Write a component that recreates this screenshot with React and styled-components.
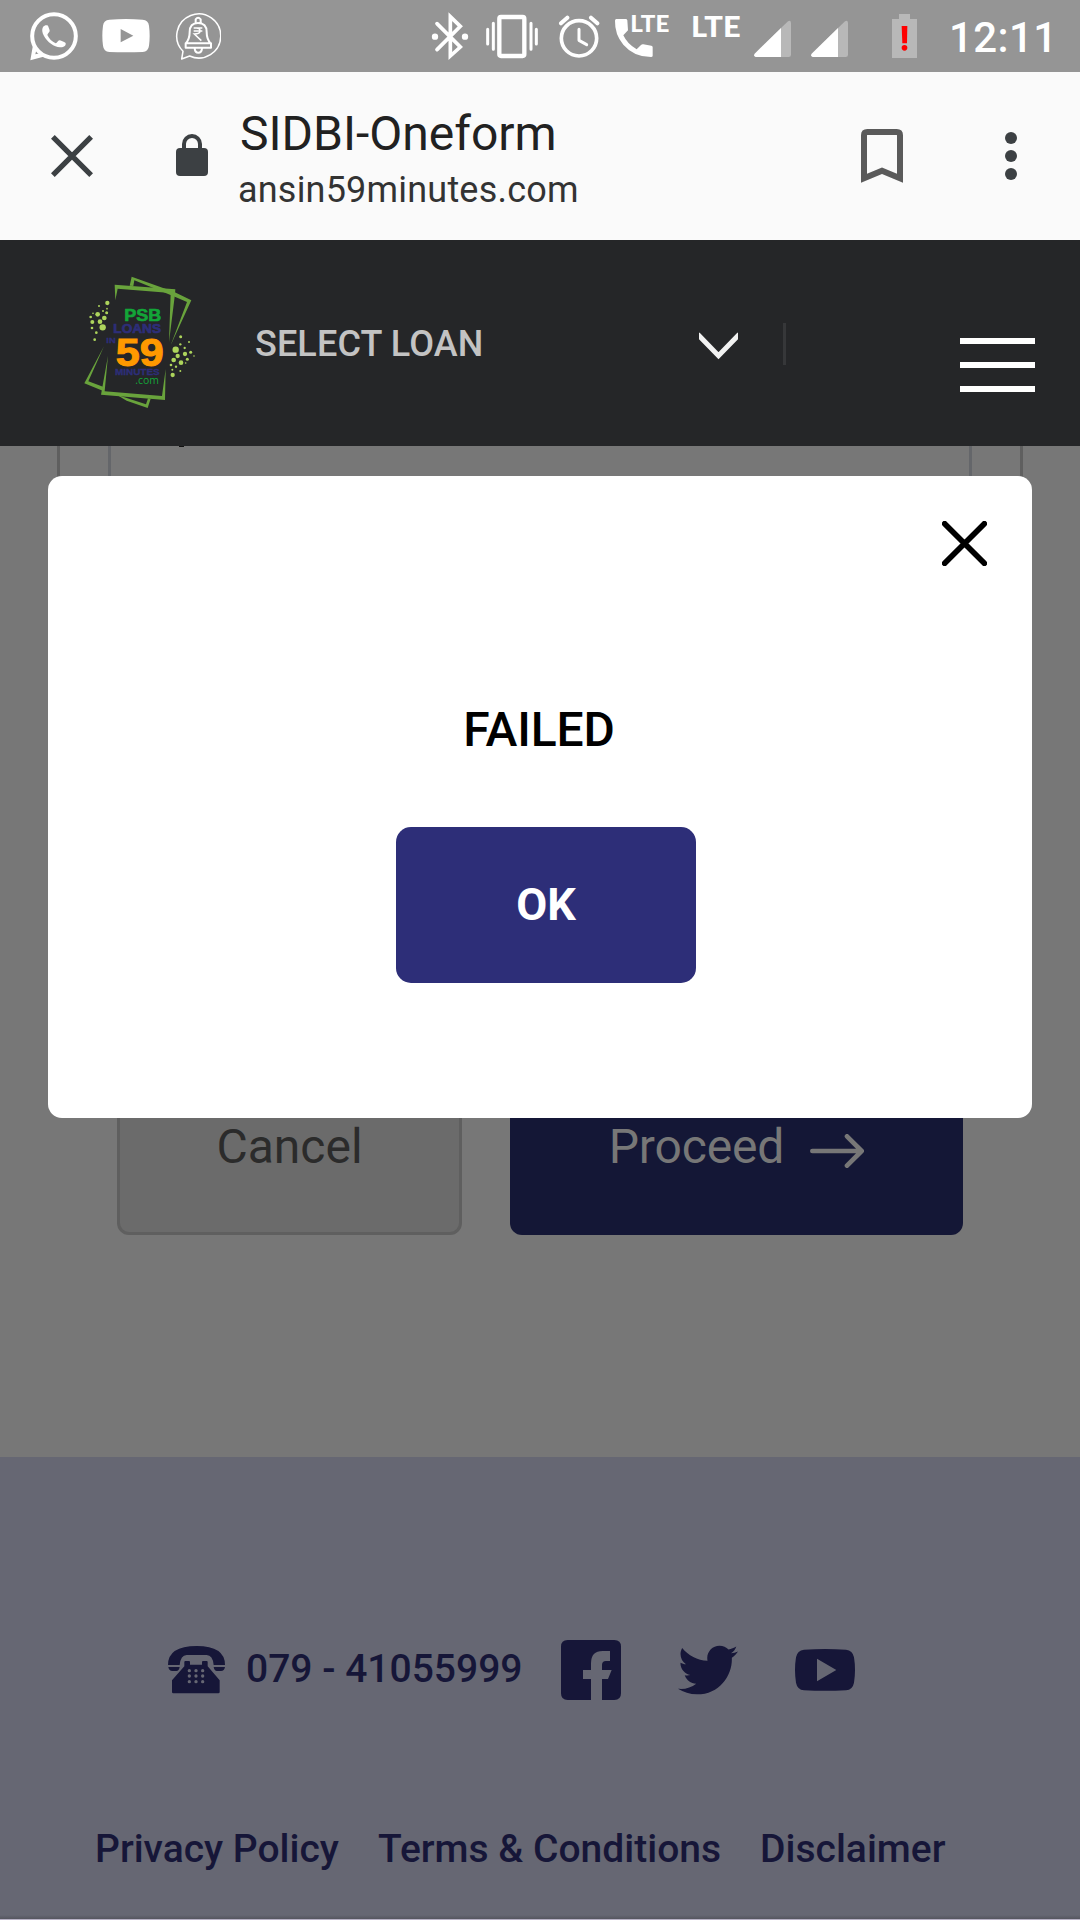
import React from "react";
import styled, { createGlobalStyle } from "styled-components";
import { FaTwitter } from "react-icons/fa";

const GlobalStyle = createGlobalStyle`
  * { box-sizing: border-box; }
  body { margin: 0; background: #777; font-family: Roboto, "Liberation Sans", sans-serif; }
  button { font-family: inherit; padding: 0; border: 0; background: none; }
  svg { display: block; flex: none; }
  a { color: inherit; text-decoration: none; }
`;

const Screen = styled.div`
  position: relative;
  display: flex;
  flex-direction: column;
  width: 1080px;
  height: 1920px;
  overflow: hidden;
  background: #777777;
`;

const StatusBar = styled.div`
  display: flex;
  flex: none;
  height: 72px;
  padding-left: 30px;
  background: #959595;
  color: #fff;
`;

const Glyph = styled.svg`
  width: ${(p) => p.$w}px;
  height: ${(p) => p.$h}px;
  margin-left: ${(p) => p.$gap || 0}px;
  margin-top: ${(p) => p.$drop || 0}px;
`;

const Clock = styled.span`
  margin-left: 32px;
  font-size: 42px;
  font-weight: 500;
  line-height: 75px;
  letter-spacing: 0.4px;
  white-space: nowrap;
`;

const BrowserBar = styled.div`
  display: flex;
  flex: none;
  height: 168px;
  padding-left: 51px;
  background: #fafafa;
  color: #3c4043;
`;

const PageInfo = styled.div`
  width: 500px;
  margin-left: 30px;
  padding-top: 34px;
  white-space: nowrap;
`;

const PageTitle = styled.div`
  padding-left: 2px;
  font-size: 48px;
  line-height: 56px;
  color: #212121;
`;

const PageHost = styled.div`
  font-size: 36px;
  line-height: 56px;
  color: #333;
  letter-spacing: 0.2px;
`;

const SiteHeader = styled.header`
  display: flex;
  flex: none;
  align-items: center;
  height: 206px;
  padding-left: 80px;
  background: #252628;
`;

const LoanSelect = styled.div`
  display: flex;
  align-items: center;
  justify-content: space-between;
  width: 483px;
  margin-left: 55px;
  padding-top: 2px;
  font-size: 36px;
  font-weight: 500;
  letter-spacing: 0.12px;
  color: #c3c3c3;
`;

const Divider = styled.div`
  width: 3px;
  height: 42px;
  margin: 2px 0 0 45px;
  background: #363739;
`;

const MenuButton = styled.button`
  display: flex;
  flex-direction: column;
  gap: 18px;
  width: 75px;
  margin: 44px 0 0 174px;
`;

const MenuBar = styled.span`
  height: 6px;
  background: #fff;
`;

const Main = styled.main`
  flex: none;
  height: 1011px;
  padding: 0 57px;
`;

const FormCard = styled.section`
  height: 612px;
  padding: 0 48px;
  border: solid #5f5f5f;
  border-width: 0 3px 3px;
`;

const Field = styled.div`
  height: 150px;
  padding-left: 68px;
  border: solid #64666a;
  border-width: 0 3px 3px;
`;

const Descender = styled.div`
  width: 5px;
  height: 1px;
  background: #111;
`;

const Actions = styled.div`
  display: flex;
  gap: 48px;
  padding-left: 60px;
`;

const ActionButton = styled.button`
  display: flex;
  align-items: center;
  justify-content: center;
  gap: 26px;
  width: ${(p) => p.$w}px;
  height: 177px;
  border-radius: 12px;
  font-size: 48px;
  line-height: 60px;
  ${(p) =>
    p.$primary
      ? "background: #141736; color: #777; letter-spacing: -0.15px;"
      : "background: #6b6b6b; color: #2b2b2b; border: 3px solid #5f5f5f;"}
`;

const Footer = styled.footer`
  display: flex;
  flex: none;
  flex-direction: column;
  height: 463px;
  background: #666773;
  color: #161638;
`;

const ContactRow = styled.div`
  display: flex;
  height: 60px;
  margin-top: 183px;
  padding-left: 168px;
`;

const PhoneNumber = styled.a`
  width: 315px;
  padding-left: 20px;
  font-size: 39px;
  font-weight: 500;
  line-height: 59px;
  white-space: nowrap;
`;

const TwitterIcon = styled(FaTwitter)`
  width: 60px;
  height: 60px;
  margin-left: 57px;
`;

const LinkRow = styled.nav`
  display: flex;
  gap: 39px;
  margin-top: 119px;
  padding-left: 95px;
  font-size: 39px;
  font-weight: 500;
  line-height: 60px;
  white-space: nowrap;
`;

const BottomEdge = styled.div`
  height: 5px;
  margin-top: auto;
  background: linear-gradient(#666773, #55555f);
  border-bottom: 1px solid #b8b2c6;
`;

const Dialog = styled.div`
  position: absolute;
  top: 476px;
  left: 48px;
  display: flex;
  flex-direction: column;
  align-items: center;
  width: 984px;
  height: 642px;
  padding-top: 45px;
  border-radius: 14px;
  background: #fff;
`;

const CloseButton = styled.button`
  align-self: flex-end;
  width: 45px;
  height: 45px;
  margin-right: 45px;
`;

const Message = styled.h2`
  margin: 134px 2px 67px 0;
  font-size: 48px;
  font-weight: 500;
  line-height: 60px;
  letter-spacing: -0.1px;
  color: #000;
`;

const OkButton = styled.button`
  width: 300px;
  height: 156px;
  margin-left: 12px;
  padding-bottom: 2px;
  border-radius: 15px;
  background: #2d2e78;
  color: #fff;
  font-size: 45px;
  font-weight: 700;
`;

const leftDots = [
  [142, 159, 6.5], [117, 168, 3], [141, 176, 2.5], [129, 183, 3], [140, 188, 4.5], [99, 190, 2.5],
  [113, 193, 7], [92, 201, 4], [133, 204, 7], [97, 216, 6], [120, 215, 7], [96, 234, 4],
  [128, 232, 9.5], [109, 248, 4], [104, 269, 4],
];
const rightDots = [
  [362, 260, 4.5], [387, 276, 3], [361, 283, 3.5], [347, 299, 9.5], [374, 294, 3.5], [392, 307, 4.5],
  [375, 312, 6.5], [353, 318, 6.5], [402, 318, 2.5], [341, 330, 7], [382, 328, 4.5], [363, 338, 7],
  [377, 339, 2.5], [333, 345, 4], [348, 350, 3.5], [337, 359, 3], [361, 363, 3], [338, 375, 6.5],
];

function StatusIcons() {
  return (
    <>
      <Glyph $w={48} $h={72} viewBox="90 0 144 216">
        <circle cx="162" cy="108" r="65.5" fill="none" stroke="#fff" strokeWidth="12" />
        <path d="M99 135L91 181L136 169L127 158L106 163L111 142Z" fill="#fff" />
        <path d="M129 81C133 76 139 74 144 77L149 91C150 97 142 101 142 105C147 116 156 125 167 130C171 130 174 122 178 121C182 121 192 126 197 129C199 140 187 142 180 142C162 141 142 126 132 108C126 98 125 88 129 81Z" fill="#fff" />
      </Glyph>
      <Glyph $w={48} $h={72} $gap={24} viewBox="306 0 144 216">
        <path fill="#fff" fillRule="evenodd" d="M328 59Q378 55 428 59Q445 60 447 77Q451 107 447 137Q445 154 428 156Q378 158 328 156Q311 154 309 137Q305 107 309 77Q311 60 328 59ZM362 87V127L400 107Z" />
      </Glyph>
      <Glyph $w={46} $h={72} $gap={24.5} viewBox="524 0 138 216" fill="none" stroke="#fff" strokeWidth="4.5">
        <path d="M548 154A66 66 0 1 1 568 168L544 177Z" strokeLinejoin="round" />
        <path strokeWidth="6" strokeLinejoin="round" d="M586 68V58Q593 49 601 58V68M556 130Q568 118 568 96Q568 69 593 69Q619 69 619 96Q619 118 631 130M556 130H632V143H556ZM583 145Q584 158 594 158Q604 158 605 145" />
        <path d="M580 84H606M580 93H606M580 84H588Q599 84 599 93Q599 102 582 102L603 122" />
      </Glyph>
      <Glyph $w={38} $h={72} $gap={210.5} viewBox="94 0 114 216">
        <path d="M112 71L182 141L152 168V50L182 79L112 149" fill="none" stroke="#fff" strokeWidth="11" strokeLinecap="round" strokeLinejoin="miter" />
        <circle cx="106" cy="110" r="9.5" fill="#fff" />
        <circle cx="196" cy="110" r="9.5" fill="#fff" />
      </Glyph>
      <Glyph $w={54} $h={72} $gap={15.5} viewBox="254 0 162 216" fill="none" stroke="#fff" strokeLinecap="round">
        <rect x="297" y="51" width="75" height="117" rx="5" strokeWidth="13" />
        <path strokeWidth="9" d="M279 70V148M392 70V148M262 88V132M408 88V132" />
      </Glyph>
      <Glyph $w={42} $h={72} $gap={19.5} viewBox="475 0 126 216" fill="none" stroke="#fff" strokeLinecap="round">
        <circle cx="538" cy="115" r="53" strokeWidth="11" />
        <path strokeWidth="12" d="M484 70L503 53M593 70L574 53" />
        <path strokeWidth="9" strokeLinejoin="round" d="M538 88V121L561 134" />
      </Glyph>
      <Glyph $w={56} $h={72} $gap={14} viewBox="643 0 168 216" fill="#fff">
        <path d="M650 57H678Q682 57 683 61L685 91L671 106Q683 132 711 148L724 135Q727 132 731 133L755 137Q759 138 759 142V167Q759 171 754 171Q703 171 671 134Q645 103 646 62Q646 57 650 57Z" />
        <text x="692" y="96" fontFamily="Lato, sans-serif" fontWeight="900" fontSize="67" textLength="117" lengthAdjust="spacingAndGlyphs">LTE</text>
      </Glyph>
      <Glyph $w={50} $h={72} $gap={20.5} viewBox="871 0 150 216" fill="#fff">
        <text x="871" y="110" fontFamily="Lato, sans-serif" fontWeight="900" fontSize="85" textLength="149" lengthAdjust="spacingAndGlyphs">LTE</text>
      </Glyph>
      <Signal gap={13.5} />
      <Signal gap={19.7} />
      <Glyph $w={25} $h={72} $gap={44.3} viewBox="516 0 75 216">
        <path d="M537 42H570V57H591V174H516V57H537Z" fill="#b8b8b8" />
        <path d="M545 78H562L561 130H547Z" fill="#f00" />
        <circle cx="553.5" cy="143.5" r="8.5" fill="#f00" />
      </Glyph>
    </>
  );
}

function Signal({ gap }) {
  return (
    <Glyph $w={37} $h={72} $gap={gap} viewBox="102 0 111 216">
      <path d="M104 161L204 64Q212 59 213 68V164Q213 171 206 171H107Q100 168 104 161Z" fill="#b8b8b8" />
      <path d="M104 161L183 84V171H107Q100 168 104 161Z" fill="#fff" />
    </Glyph>
  );
}

function Logo() {
  return (
    <Glyph $w={120} $h={206} viewBox="60 -30 360 618">
      <g fill="#69a33c">
        <path d="M164 104L346 118L345 132L327 276L332 129L173 116L166 151Z" />
        <path d="M209 107L215 80L343 126L394 151L332 286L381 156L341 139L223 91L220 108Z" />
        <path d="M144 317L134 424L306 438L317 357L315 450L123 434Z" />
        <path d="M132 289L85 394L129 410L128 422L73 400Z" />
        <path d="M170 434L258 463L264 445L272 446L263 474L200 452Z" />
      </g>
      <g fill="#add45c">
        {leftDots.concat(rightDots).map(([x, y, r]) => (
          <circle key={`${x}-${y}`} cx={x} cy={y} r={r} />
        ))}
      </g>
      <g fontFamily="'Liberation Sans', Arial, sans-serif" fontWeight="700" fill="#2d2e78" stroke="#2d2e78" strokeWidth="2">
        <text x="193" y="213" fontSize="52" textLength="111" lengthAdjust="spacingAndGlyphs" fill="#13a538" stroke="#13a538">PSB</text>
        <text x="160" y="249" fontSize="38" textLength="143" lengthAdjust="spacingAndGlyphs">LOANS</text>
        <text x="139" y="278" fontSize="23" textLength="28" lengthAdjust="spacingAndGlyphs" strokeWidth="1">IN</text>
        <text x="167" y="347" fontSize="116" textLength="144" lengthAdjust="spacingAndGlyphs" fill="#ff9900" stroke="#ff9900" strokeWidth="3">59</text>
        <text x="165" y="375" fontSize="27" textLength="134" lengthAdjust="spacingAndGlyphs" strokeWidth="1">MINUTES</text>
      </g>
      <text x="226" y="402" fontFamily="'Open Sans', sans-serif" fontSize="35" textLength="71" lengthAdjust="spacingAndGlyphs" fill="#13a538">.com</text>
    </Glyph>
  );
}

export default function App() {
  return (
    <Screen>
      <GlobalStyle />
      <StatusBar>
        <StatusIcons />
        <Clock>12:11</Clock>
      </StatusBar>
      <BrowserBar>
        <Glyph $w={42} $h={168} viewBox="153 216 126 504">
          <path d="M158.500 410.500L273.500 525.500M273.500 410.500L158.500 525.500" stroke="currentColor" strokeWidth="16" />
        </Glyph>
        <Glyph $w={32} $h={168} $gap={83} viewBox="528 216 96 504">
          <rect x="528" y="444" width="96" height="84" rx="12" fill="currentColor" />
          <path d="M552 448V432A24 24 0 0 1 600 432V448" fill="none" stroke="currentColor" strokeWidth="12" />
        </Glyph>
        <PageInfo>
          <PageTitle>SIDBI-Oneform</PageTitle>
          <PageHost>ansin59minutes.com</PageHost>
        </PageInfo>
        <Glyph $w={42} $h={168} $gap={123} viewBox="423 216 126 504">
          <path d="M432 535V406Q432 396 442 396H530Q540 396 540 406V535L486 512Z" fill="none" stroke="#5a5a5a" strokeWidth="18" />
        </Glyph>
        <Glyph $w={12} $h={168} $gap={102} viewBox="855 216 36 504" fill="currentColor">
          <circle cx="873" cy="414" r="18" />
          <circle cx="873" cy="468" r="18" />
          <circle cx="873" cy="522" r="18" />
        </Glyph>
      </BrowserBar>
      <SiteHeader>
        <Logo />
        <LoanSelect>
          SELECT LOAN
          <Glyph $w={39} $h={30} $drop={3} viewBox="117 122 117 90">
            <path d="M113 132L175.500 196L238 132" fill="none" stroke="#f2f2f2" strokeWidth="15" />
          </Glyph>
        </LoanSelect>
        <Divider />
        <MenuButton aria-label="Menu">
          <MenuBar />
          <MenuBar />
          <MenuBar />
        </MenuButton>
      </SiteHeader>
      <Main>
        <FormCard>
          <Field>
            <Descender />
          </Field>
        </FormCard>
        <Actions>
          <ActionButton $w={345}>Cancel</ActionButton>
          <ActionButton $w={453} $primary>
            Proceed
            <Glyph $w={54} $h={34} $drop={8} viewBox="960 162 162 102">
              <path d="M967 213H1115M1071 169L1115 213L1071 257" fill="none" stroke="currentColor" strokeWidth="14" strokeLinecap="round" strokeLinejoin="round" />
            </Glyph>
          </ActionButton>
        </Actions>
      </Main>
      <Footer>
        <ContactRow>
          <Glyph $w={58} $h={60} viewBox="84 90 174 180" fill="currentColor">
            <path d="M84 165Q84 108 170 108Q255 108 255 165H221Q218 135 200 135H140Q122 135 119 165ZM85 171H119Q117 183 109 183H97Q87 183 85 171ZM221 171H255Q253 183 243 183H231Q223 183 221 171Z" />
            <path d="M133 156Q133 153 136 153H147Q150 153 150 156V164H186V156Q186 153 189 153H200Q203 153 203 156V169L239 211V246Q239 250 235 250H100Q96 250 96 246V211L133 169Z" />
            <g fill="#666773">
              {[148, 168, 188].map((x) => [182, 198, 215].map((y) => <circle key={`${x}${y}`} cx={x} cy={y} r="5" />))}
            </g>
          </Glyph>
          <PhoneNumber href="#">079 - 41055999</PhoneNumber>
          <Glyph $w={60} $h={60} $gap={20} viewBox="63 90 180 180" fill="currentColor">
            <path d="M83 90H223Q243 90 243 110V250Q243 270 223 270H186V207H204L215 180H186V165Q186 153 198 153H210V123H188Q153 123 153 160V180H129V207H153V270H83Q63 270 63 250V110Q63 90 83 90Z" />
          </Glyph>
          <TwitterIcon />
          <Glyph $w={60} $h={60} $gap={57} viewBox="765 90 180 180" fill="currentColor">
            <path fillRule="evenodd" d="M792 119Q855 115 918 119Q938 121 942 142Q948 180 942 218Q938 239 918 241Q855 244 792 241Q772 239 768 218Q762 180 768 142Q772 121 792 119ZM831 146V214L889 180Z" />
          </Glyph>
        </ContactRow>
        <LinkRow>
          <a href="#">Privacy Policy</a>
          <a href="#">Terms &amp; Conditions</a>
          <a href="#">Disclaimer</a>
        </LinkRow>
        <BottomEdge />
      </Footer>
      <Dialog role="dialog">
        <CloseButton aria-label="Close">
          <Glyph $w={45} $h={45} viewBox="846 693 135 135">
            <path d="M854 701L973 820M973 701L854 820" stroke="#000" strokeWidth="17" strokeLinecap="round" />
          </Glyph>
        </CloseButton>
        <Message>FAILED</Message>
        <OkButton>OK</OkButton>
      </Dialog>
    </Screen>
  );
}
